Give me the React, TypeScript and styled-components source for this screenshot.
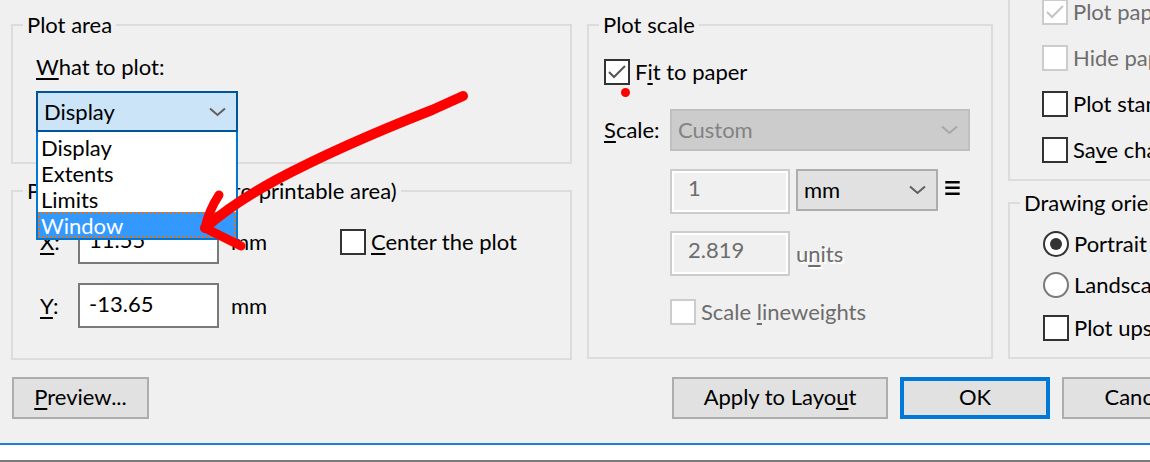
import React from "react";
import styled, { createGlobalStyle } from "styled-components";

const FONT = `font-family: Lato, "Noto Sans", sans-serif; font-size: 22px; line-height: 26px;`;

const GlobalStyle = createGlobalStyle`
  html, body { margin: 0; padding: 0; background: #f0f0f0; }
  body { width: 1150px; height: 462px; overflow: hidden; ${FONT} color: #000; }
`;

const Window = styled.div`
  position: relative;
  width: 1150px;
  height: 462px;
  overflow: hidden;
  display: flex;
  flex-direction: column;
  background: #f0f0f0;
`;

const Panels = styled.div`
  display: grid;
  grid-template-columns: 561px 406px 300px;
  column-gap: 15px;
  padding: 12px 0 0 11px;
  align-items: start;
`;

const Column = styled.div<{ $gap: number }>`
  display: flex;
  flex-direction: column;
  gap: ${(p) => p.$gap}px;
`;

const Group = styled.fieldset<{ $offsetTop?: number }>`
  margin: ${(p) => p.$offsetTop ?? 0}px 0 0 0;
  padding: 0;
  min-width: 0;
  border: 2px solid #dcdcdc;
`;

const Legend = styled.legend`
  ${FONT}
  padding: 0 4px;
  margin-left: 10px;
  white-space: nowrap;
`;

const Body = styled.div<{ $pad: string; $gap?: number }>`
  display: flex;
  flex-direction: column;
  gap: ${(p) => p.$gap ?? 0}px;
  padding: ${(p) => p.$pad};
`;

const Text = styled.span<{ $muted?: boolean; $emboss?: boolean }>`
  ${FONT}
  white-space: nowrap;
  color: ${(p) => (p.$muted ? "#6d6d6d" : "#000")};
  text-shadow: ${(p) => (p.$emboss ? "2px 2px 0 #ffffff" : "none")};
  u { text-decoration-thickness: 2px; text-underline-offset: 3px; }
`;

const FieldLabel = styled(Text)`
  display: block;
  height: 26px;
`;

/* ---------- combo boxes ---------- */
const ComboWrap = styled.div`
  position: relative;
  margin-top: 11px;
  width: 202px;
`;

const Combo = styled.div<{ $variant: "open" | "disabled" | "normal"; $w: number; $h?: number }>`
  box-sizing: border-box;
  width: ${(p) => p.$w}px;
  height: ${(p) => p.$h ?? 42}px;
  display: flex;
  align-items: center;
  justify-content: space-between;
  padding: 0 10px 0 6px;
  ${FONT}
  background: ${(p) => (p.$variant === "open" ? "#cce4f7" : p.$variant === "disabled" ? "#cccccc" : "#e1e1e1")};
  border: 2px solid ${(p) => (p.$variant === "open" ? "#005499" : p.$variant === "disabled" ? "#bfbfbf" : "#adadad")};
  color: ${(p) => (p.$variant === "disabled" ? "#838383" : "#000")};
`;

const Chevron = ({ color }: { color: string }) => (
  <svg width="17" height="10" viewBox="0 0 17 10">
    <polyline points="1,1.5 8.5,8 16,1.5" fill="none" stroke={color} strokeWidth="2" />
  </svg>
);

const DropList = styled.ul`
  position: absolute;
  z-index: 5;
  top: 100%;
  left: 0;
  width: 100%;
  box-sizing: border-box;
  margin: 0;
  padding: 2px 0 0;
  list-style: none;
  background: #fff;
  border: 2px solid #0078d7;
  border-top: none;
`;

const DropItem = styled.li<{ $selected?: boolean }>`
  ${FONT}
  height: 26px;
  padding: 1px 0 0 3px;
  box-sizing: border-box;
  background: ${(p) => (p.$selected ? "#3399ff" : "transparent")};
  color: ${(p) => (p.$selected ? "#fff" : "#000")};
  outline: ${(p) => (p.$selected ? "2px dotted #d8741f" : "none")};
  outline-offset: -2px;
`;

/* ---------- inputs ---------- */
const TextBox = styled.div<{ $w: number; $disabled?: boolean }>`
  box-sizing: border-box;
  width: ${(p) => p.$w}px;
  height: 45px;
  display: flex;
  align-items: center;
  padding-left: ${(p) => (p.$disabled ? 16 : 9)}px;
  ${FONT}
  background: ${(p) => (p.$disabled ? "#f0f0f0" : "#fff")};
  border: 2px solid ${(p) => (p.$disabled ? "#cccccc" : "#7a7a7a")};
  box-shadow: ${(p) => (p.$disabled ? "inset 0 0 0 2px #ffffff" : "none")};
  color: ${(p) => (p.$disabled ? "#6d6d6d" : "#000")};
  padding-bottom: ${(p) => (p.$disabled ? 8 : 4)}px;
`;

/* ---------- check / radio ---------- */
const CheckRow = styled.label`
  display: flex;
  align-items: center;
  gap: 5px;
  height: 26px;
`;

const Box = styled.span<{ $disabled?: boolean }>`
  position: relative;
  box-sizing: border-box;
  width: 26px;
  height: 26px;
  flex: none;
  background: #fff;
  border: 2px solid ${(p) => (p.$disabled ? "#cccccc" : "#333333")};
  display: flex;
  align-items: center;
  justify-content: center;
`;

const Tick = ({ color }: { color: string }) => (
  <svg width="20" height="16" viewBox="0 0 20 16">
    <polyline points="2,8 7,13 18,2" fill="none" stroke={color} strokeWidth="2" />
  </svg>
);

const Radio = styled.span<{ $on?: boolean }>`
  box-sizing: border-box;
  width: 26px;
  height: 26px;
  flex: none;
  border-radius: 50%;
  background: #fff;
  border: 2px solid ${(p) => (p.$on ? "#333333" : "#7a7a7a")};
  display: flex;
  align-items: center;
  justify-content: center;
  &::after {
    content: "";
    display: ${(p) => (p.$on ? "block" : "none")};
    width: 12px;
    height: 12px;
    border-radius: 50%;
    background: #333333;
  }
`;

const RedDot = styled.span`
  position: absolute;
  left: 15px;
  top: 27px;
  width: 9px;
  height: 9px;
  border-radius: 50%;
  background: #ff0000;
`;

/* ---------- rows ---------- */
const OffsetRow = styled.div`
  display: grid;
  grid-template-columns: 38px 141px 121px auto;
  align-items: center;
  height: 45px;
`;

const Unit = styled(Text)`
  padding-left: 12px;
`;

const StackRow = styled.div<{ $top: number }>`
  display: flex;
  align-items: center;
  margin-top: ${(p) => p.$top}px;
`;

const ScaleLabel = styled(Text)`
  width: 66px;
`;

const IndentRow = styled.div<{ $top: number }>`
  display: flex;
  align-items: flex-start;
  gap: 6px;
  padding-left: 66px;
  margin-top: ${(p) => p.$top}px;
`;

const Equals = styled.span`
  font-family: "DejaVu Sans", sans-serif;
  font-size: 32px;
  line-height: 36px;
  margin-left: -1px;
  display: inline-block;
  transform: scaleX(0.72);
  transform-origin: left center;
`;

const Units = styled(Text)`
  align-self: center;
`;

/* ---------- buttons ---------- */
const ButtonRow = styled.div`
  display: flex;
  align-items: center;
  padding-left: 12px;
  margin-top: 17px;
`;

const ButtonGroup = styled.div`
  display: flex;
  gap: 12px;
  margin-left: 523px;
`;

const Button = styled.button<{ $w: number; $default?: boolean }>`
  box-sizing: border-box;
  width: ${(p) => p.$w}px;
  height: 42px;
  ${FONT}
  color: #000;
  background: #e1e1e1;
  border: ${(p) => (p.$default ? "4px solid #0078d7" : "2px solid #adadad")};
  padding: 0 0 2px;
  flex: none;
  u { text-decoration-thickness: 2px; text-underline-offset: 3px; }
`;

const Footer = styled.div`
  margin-top: 24px;
  height: 15px;
  background: #fff;
  border-top: 2px solid #1f7fd4;
  border-bottom: 2px solid #7a7a7a;
`;

const Annotation = styled.svg`
  position: absolute;
  left: 0;
  top: 0;
  z-index: 10;
  pointer-events: none;
`;

const Check = ({
  label,
  checked,
  disabled,
  dot,
}: {
  label: React.ReactNode;
  checked?: boolean;
  disabled?: boolean;
  dot?: boolean;
}) => (
  <CheckRow>
    <Box $disabled={disabled}>
      {checked && <Tick color={disabled ? "#c4c4c4" : "#555555"} />}
      {dot && <RedDot />}
    </Box>
    <Text $muted={disabled}>{label}</Text>
  </CheckRow>
);

export default function App() {
  return (
    <Window>
      <GlobalStyle />
      <Panels>
        <Column $gap={14}>
          <Group>
            <Legend>Plot area</Legend>
            <Body $pad="16px 0 30px 23px">
              <FieldLabel>
                <u>W</u>hat to plot:
              </FieldLabel>
              <ComboWrap>
                <Combo $variant="open" $w={202} $h={41}>
                  <span>Display</span>
                  <Chevron color="#5f5f5f" />
                </Combo>
                <DropList>
                  <DropItem>Display</DropItem>
                  <DropItem>Extents</DropItem>
                  <DropItem>Limits</DropItem>
                  <DropItem $selected>Window</DropItem>
                </DropList>
              </ComboWrap>
            </Body>
          </Group>
          <Group>
            <Legend>Plot offset (origin set to printable area)</Legend>
            <Body $pad="15px 0 30px 27px" $gap={19}>
              <OffsetRow>
                <Text>
                  <u>X</u>:
                </Text>
                <TextBox $w={141}>11.55</TextBox>
                <Unit>mm</Unit>
                <Check
                  label={
                    <>
                      <u>C</u>enter the plot
                    </>
                  }
                />
              </OffsetRow>
              <OffsetRow>
                <Text>
                  <u>Y</u>:
                </Text>
                <TextBox $w={141}>-13.65</TextBox>
                <Unit>mm</Unit>
              </OffsetRow>
            </Body>
          </Group>
        </Column>

        <Column $gap={0}>
          <Group>
            <Legend>Plot scale</Legend>
            <Body $pad="21px 0 32px 15px">
              <Check
                checked
                dot
                label={
                  <>
                    F<u>i</u>t to paper
                  </>
                }
              />
              <StackRow $top={24}>
                <ScaleLabel>
                  <u>S</u>cale:
                </ScaleLabel>
                <Combo $variant="disabled" $w={300}>
                  <span>Custom</span>
                  <Chevron color="#a6a6a6" />
                </Combo>
              </StackRow>
              <IndentRow $top={18}>
                <TextBox $w={120} $disabled>
                  1
                </TextBox>
                <Combo $variant="normal" $w={142}>
                  <span>mm</span>
                  <Chevron color="#5f5f5f" />
                </Combo>
                <Equals>≡</Equals>
              </IndentRow>
              <IndentRow $top={17}>
                <TextBox $w={120} $disabled>
                  2.819
                </TextBox>
                <Units $muted $emboss>
                  u<u>n</u>its
                </Units>
              </IndentRow>
              <IndentRow $top={23}>
                <Check
                  disabled
                  label={
                    <>
                      Scale <u>l</u>ineweights
                    </>
                  }
                />
              </IndentRow>
            </Body>
          </Group>
        </Column>

        <Column $gap={9}>
          <Group $offsetTop={-60}>
            <Body $pad="45px 0 16px 32px" $gap={20}>
              <Check checked disabled label="Plot paperspace last" />
              <Check disabled label="Hide paperspace objects" />
              <Check label="Plot stamp on" />
              <Check
                label={
                  <>
                    Sa<u>v</u>e changes to layout
                  </>
                }
              />
            </Body>
          </Group>
          <Group>
            <Legend>Drawing orientation</Legend>
            <Body $pad="15px 0 16px 33px">
              <CheckRow>
                <Radio $on />
                <Text>Portrait</Text>
              </CheckRow>
              <StackRow $top={15}>
                <CheckRow>
                  <Radio />
                  <Text>Landscape</Text>
                </CheckRow>
              </StackRow>
              <StackRow $top={17}>
                <Check label="Plot upside-down" />
              </StackRow>
            </Body>
          </Group>
        </Column>
      </Panels>

      <ButtonRow>
        <Button $w={137}>
          <u>P</u>review...
        </Button>
        <ButtonGroup>
          <Button $w={216}>
            Apply to Layo<u>u</u>t
          </Button>
          <Button $w={150} $default>
            OK
          </Button>
          <Button $w={150}>Cancel</Button>
          <Button $w={150}>Help</Button>
        </ButtonGroup>
      </ButtonRow>
      <Footer />

      <Annotation width="1150" height="462" viewBox="0 0 1150 462">
        <path
          d="M463 96 L432 110 Q 340 146 276 180 Q 232 204 205 228"
          fill="none"
          stroke="#ff0000"
          strokeWidth="10"
          strokeLinecap="round"
          strokeLinejoin="round"
        />
        <path
          d="M219 195 Q 209 210 205 228 L 241 246"
          fill="none"
          stroke="#ff0000"
          strokeWidth="9"
          strokeLinecap="round"
          strokeLinejoin="round"
        />
      </Annotation>
    </Window>
  );
}
